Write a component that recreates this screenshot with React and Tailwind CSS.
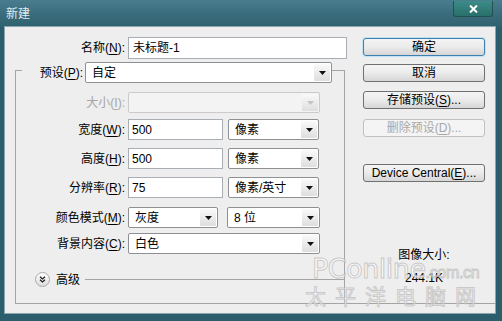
import React from 'react';

const U = ({ c }) => <span className="underline underline-offset-[2px]">{c}</span>;

function Arrow({ disabled }) {
  return (
    <span className="flex h-[17px] w-[16px] items-center justify-center rounded-[1px] bg-gradient-to-b from-[#fafafa] to-[#dedede]">
      <svg width="7" height="4" viewBox="0 0 7 4">
        <path d="M0 0h7L3.5 4z" fill={disabled ? '#c4c4c4' : '#111'} />
      </svg>
    </span>
  );
}

function Select({ value, w, disabled, ml = '' }) {
  return (
    <div
      className={`flex h-[21px] items-center rounded-[2px] border pl-[6px] pr-[1px] ${w} ${ml} ${
        disabled ? 'border-[#cbcbcb] bg-[#f3f3f3]' : 'border-[#8f9094] bg-white'
      }`}
    >
      <span className="flex-1 whitespace-nowrap">{value}</span>
      <Arrow disabled={disabled} />
    </div>
  );
}

function Input({ value, w }) {
  return (
    <div className={`flex h-[21px] items-center border border-[#a9aeb5] bg-white pl-[3px] ${w}`}>{value}</div>
  );
}

function Row({ label, mt, children, disabled }) {
  return (
    <div className={`flex items-center ${mt}`}>
      <span className={`w-[112px] whitespace-nowrap pr-[3px] text-right ${disabled ? 'text-[#a6a6a6]' : ''}`}>
        {label}
      </span>
      {children}
    </div>
  );
}

function Button({ children, mt, primary, disabled }) {
  let tone = 'border-[#707070] text-black';
  if (primary) tone = 'border-[#3c7fb1] text-black shadow-[0_0_0_1px_#bfe3f5]';
  if (disabled) tone = 'border-[#c2c2c2] text-[#a8a8a8]';
  return (
    <div
      className={`flex h-[18px] w-[122px] items-center justify-center rounded-[3px] border bg-gradient-to-b ${
        disabled ? 'from-[#f4f4f4] to-[#f4f4f4]' : 'from-[#f4f4f4] via-[#ebebeb] to-[#d6d6d6]'
      } ${tone} ${mt}`}
    >
      {children}
    </div>
  );
}

export default function App() {
  return (
    <div className="relative h-[321px] w-[502px] overflow-hidden bg-[#2c5d6c] font-['Liberation_Sans','Noto_Sans_CJK_SC',sans-serif] text-[12px] leading-[14px] text-black">
      {/* title bar */}
      <div className="flex h-[27px] bg-gradient-to-b from-[#4a7e8f] via-[#3a6d7d] to-[#30616f]">
        <span className="ml-[6px] self-center text-[12px] text-[#e4ecee]">新建</span>
        <div className="ml-auto mr-[9px] mt-[1px] flex h-[16px] w-[40px] items-center justify-center rounded-b-[3px] border border-t-0 border-[#24504f] bg-gradient-to-b from-[#3d8c88] to-[#276f6b]">
          <svg width="9" height="8" viewBox="0 0 9 8">
            <path d="M1 0.5l7 7M8 0.5l-7 7" stroke="#fff" strokeWidth="2" />
          </svg>
        </div>
      </div>

      {/* body */}
      <div className="ml-[5px] flex h-[286px] w-[490px] flex-col bg-[#eeeeee] shadow-[0_0_0_1px_#8aa5ae]">
        <div className="flex flex-1">
          <div className="flex w-[348px] flex-col pt-[10px]">
            <div className="flex items-center">
              <span className="w-[123px] whitespace-nowrap pr-[3px] text-right">
                名称(<U c="N" />):
              </span>
              <div className="flex h-[22px] w-[219px] items-center border border-[#a9aeb5] bg-white pl-[4px]">
                未标题-1
              </div>
            </div>

            <div className="ml-[10px] mt-[11px] flex w-[330px] flex-1 flex-col border-l border-r border-t border-[#a4a4a4]">
              <div className="-mt-[9px] ml-[6px] flex items-center">
                <span className="w-[63px] whitespace-nowrap bg-[#eeeeee] pr-[2px] text-right">
                  预设(<U c="P" />):
                </span>
                <Select value="自定" w="w-[247px]" />
              </div>

              <Row mt="mt-[9px]" disabled label={<>大小(<U c="I" />):</>}>
                <Select value="" w="w-[192px]" disabled />
              </Row>
              <Row mt="mt-[6px]" label={<>宽度(<U c="W" />):</>}>
                <Input value="500" w="w-[95px]" />
                <Select value="像素" w="w-[91px]" ml="ml-[5px]" />
              </Row>
              <Row mt="mt-[8px]" label={<>高度(<U c="H" />):</>}>
                <Input value="500" w="w-[95px]" />
                <Select value="像素" w="w-[91px]" ml="ml-[5px]" />
              </Row>
              <Row mt="mt-[8px]" label={<>分辨率(<U c="R" />):</>}>
                <Input value="75" w="w-[95px]" />
                <Select value="像素/英寸" w="w-[91px]" ml="ml-[5px]" />
              </Row>
              <Row mt="mt-[9px]" label={<>颜色模式(<U c="M" />):</>}>
                <Select value="灰度" w="w-[90px]" />
                <Select value="8 位" w="w-[93px]" ml="ml-[9px]" />
              </Row>
              <Row mt="mt-[5px]" label={<>背景内容(<U c="C" />):</>}>
                <Select value="白色" w="w-[192px]" />
              </Row>

              <div className="ml-[19px] mt-[18px] flex items-center">
                <span className="flex h-[15px] w-[15px] items-center justify-center rounded-full border border-[#a9a9a9] bg-gradient-to-b from-white to-[#dcdcdc]">
                  <svg width="7" height="7" viewBox="0 0 7 7">
                    <path d="M1 0.8l2.5 2.2L6 0.8M1 3.8l2.5 2.2L6 3.8" stroke="#222" strokeWidth="1.3" fill="none" />
                  </svg>
                </span>
                <span className="ml-[6px]">高级</span>
                <span className="ml-[5px] h-0 flex-1 border-t border-[#a4a4a4]" />
              </div>
            </div>
          </div>

          <div className="ml-[10px] flex w-[122px] flex-col items-center pt-[11px]">
            <Button primary>确定</Button>
            <Button mt="mt-[8px]">取消</Button>
            <Button mt="mt-[9px]">
              存储预设(<U c="S" />)...
            </Button>
            <Button mt="mt-[10px]" disabled>
              删除预设(<U c="D" />)...
            </Button>
            <Button mt="mt-[27px]">
              Device Central(<U c="E" />)...
            </Button>
            <span className="mt-[66px]">图像大小:</span>
            <span className="mt-[9px]">244.1K</span>
          </div>
        </div>
        <div className="mb-[9px] ml-[10px] border-t border-[#a4a4a4]" />
      </div>

      {/* watermark */}
      <div className="pointer-events-none absolute left-[312px] top-[255px] flex flex-col opacity-75">
        <div className="flex items-baseline leading-none text-white [-webkit-text-stroke:1px_#bdbdbd]">
          <span className="font-['DejaVu_Sans',sans-serif] text-[27px] tracking-[-0.5px]">PConline</span>
          <span className="font-['Liberation_Sans',sans-serif] text-[16px] tracking-[-0.3px]">.com.cn</span>
        </div>
        <div className="-ml-[7px] mt-[3px] font-['Noto_Sans_CJK_SC',sans-serif] text-[21px] leading-none tracking-[9px] text-white [-webkit-text-stroke:1px_#bdbdbd]">
          太平洋电脑网
        </div>
      </div>
    </div>
  );
}
